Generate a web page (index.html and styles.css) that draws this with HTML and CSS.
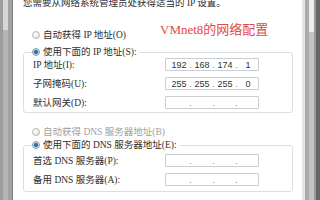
FILE: index.html
```html
<!DOCTYPE html>
<html>
<head>
<meta charset="utf-8">
<link rel="stylesheet" href="styles.css">
</head>
<body>
<div class="screen">
  <div class="strip-left"><div class="thumb-left"></div></div>
  <div class="main">
    <p class="intro">您需要从网络系统管理员处获得适当的 IP 设置。</p>
    <div class="radio-row r-auto-ip"><span class="radio"></span><span>自动获得 IP 地址(O)</span></div>
    <fieldset class="group g-ip">
      <legend class="radio-row"><span class="radio on"></span><span>使用下面的 IP 地址(S):</span></legend>
      <div class="grid g1">
        <span class="lbl">IP 地址(I):</span>
        <div class="ip"><span class="seg">192</span><span class="dot">.</span><span class="seg">168</span><span class="dot">.</span><span class="seg">174</span><span class="dot">.</span><span class="seg">1</span></div>
        <span class="lbl">子网掩码(U):</span>
        <div class="ip"><span class="seg">255</span><span class="dot">.</span><span class="seg">255</span><span class="dot">.</span><span class="seg">255</span><span class="dot">.</span><span class="seg">0</span></div>
        <span class="lbl">默认网关(D):</span>
        <div class="ip"><span class="seg"></span><span class="dot">.</span><span class="seg"></span><span class="dot">.</span><span class="seg"></span><span class="dot">.</span><span class="seg"></span></div>
      </div>
    </fieldset>
    <div class="radio-row r-auto-dns disabled"><span class="radio"></span><span>自动获得 DNS 服务器地址(B)</span></div>
    <fieldset class="group g-dns">
      <legend class="radio-row"><span class="radio on"></span><span>使用下面的 DNS 服务器地址(E):</span></legend>
      <div class="grid g2">
        <span class="lbl">首选 DNS 服务器(P):</span>
        <div class="ip"><span class="seg"></span><span class="dot">.</span><span class="seg"></span><span class="dot">.</span><span class="seg"></span><span class="dot">.</span><span class="seg"></span></div>
        <span class="lbl">备用 DNS 服务器(A):</span>
        <div class="ip"><span class="seg"></span><span class="dot">.</span><span class="seg"></span><span class="dot">.</span><span class="seg"></span><span class="dot">.</span><span class="seg"></span></div>
      </div>
    </fieldset>
  </div>
  <div class="strip-right"><div class="thumb-right"></div></div>
  <div class="note">VMnet8的网络配置</div>
</div>
</body>
</html>
```

FILE: styles.css
```css
html, body {
  margin: 0;
  padding: 0;
  background: #ffffff;
}
.screen {
  position: relative;
  width: 320px;
  height: 200px;
  overflow: hidden;
  display: flex;
  font-family: "Liberation Serif", "Noto Sans CJK SC", serif;
  font-size: 9.5px;
  color: #2e2e2e;
}
.strip-left {
  width: 13px;
  flex: none;
  background: linear-gradient(to right, #9c9c9c 0 3px, #b4b4b4 3px 8px, #a2a2a2 8px 12px, #7c7c7c 12px 13px);
}
.thumb-left {
  margin-left: 3px;
  width: 5px;
  height: 30px;
  background: #d6d6d6;
}
.strip-right {
  width: 18px;
  flex: none;
  background: linear-gradient(to right, #e4e4e4 0 3px, #ababab 3px 7px, #c4c4c4 7px 12px, #9a9a9a 12px 14px, #666666 14px 18px);
}
.thumb-right {
  margin-left: 7px;
  width: 5px;
  height: 32px;
  background: #ececec;
}
.main {
  flex: 1;
  padding: 0 9px 0 10px;
}
.intro {
  margin: -3px 0 0 0;
  line-height: 12px;
  white-space: nowrap;
}
.radio-row {
  display: flex;
  align-items: center;
  gap: 3px;
  line-height: 12px;
  white-space: nowrap;
}
.r-auto-ip {
  margin: 20px 0 0 9px;
}
.r-auto-dns {
  margin: 13px 0 0 9px;
}
.disabled {
  color: #a0a0a0;
}
.radio {
  width: 6px;
  height: 6px;
  border-radius: 50%;
  border: 1px solid #b8b8b8;
  background: radial-gradient(circle at 40% 40%, #ffffff, #dcdcdc);
  flex: none;
}
.radio.on {
  border-color: #8a9aa8;
  background: radial-gradient(circle, #2f6fae 0 1.6px, #9cc0dc 2.2px, #e8eef2 3px);
}
.group {
  margin: 0;
  border: 1px solid #dcdfe2;
  border-radius: 3px;
  padding: 0 8px 3px 9px;
  min-width: 0;
}
.group legend {
  padding: 0 2px 0 0;
  margin-left: -1px;
}
.g-ip {
  margin-top: 5px;
}
.g-dns {
  margin-top: 1px;
  padding-bottom: 5px;
}
.grid {
  display: grid;
  grid-template-columns: 132px 94px;
  row-gap: 6px;
  align-items: center;
}
.g2 {
  margin-top: 3px;
}
.lbl {
  white-space: nowrap;
  line-height: 12px;
}
.ip {
  height: 11px;
  border: 1px solid #c9ced3;
  border-radius: 1px;
  display: flex;
  align-items: center;
  padding-left: 4px;
  font-family: "Liberation Sans", sans-serif;
  font-size: 9px;
  color: #333;
}
.seg {
  width: 18px;
  text-align: center;
}
.dot {
  width: 5px;
  text-align: center;
  color: #777;
}
.note {
  position: absolute;
  left: 160px;
  top: 22px;
  font-size: 13px;
  line-height: 16px;
  color: #e24a45;
  white-space: nowrap;
}
```
